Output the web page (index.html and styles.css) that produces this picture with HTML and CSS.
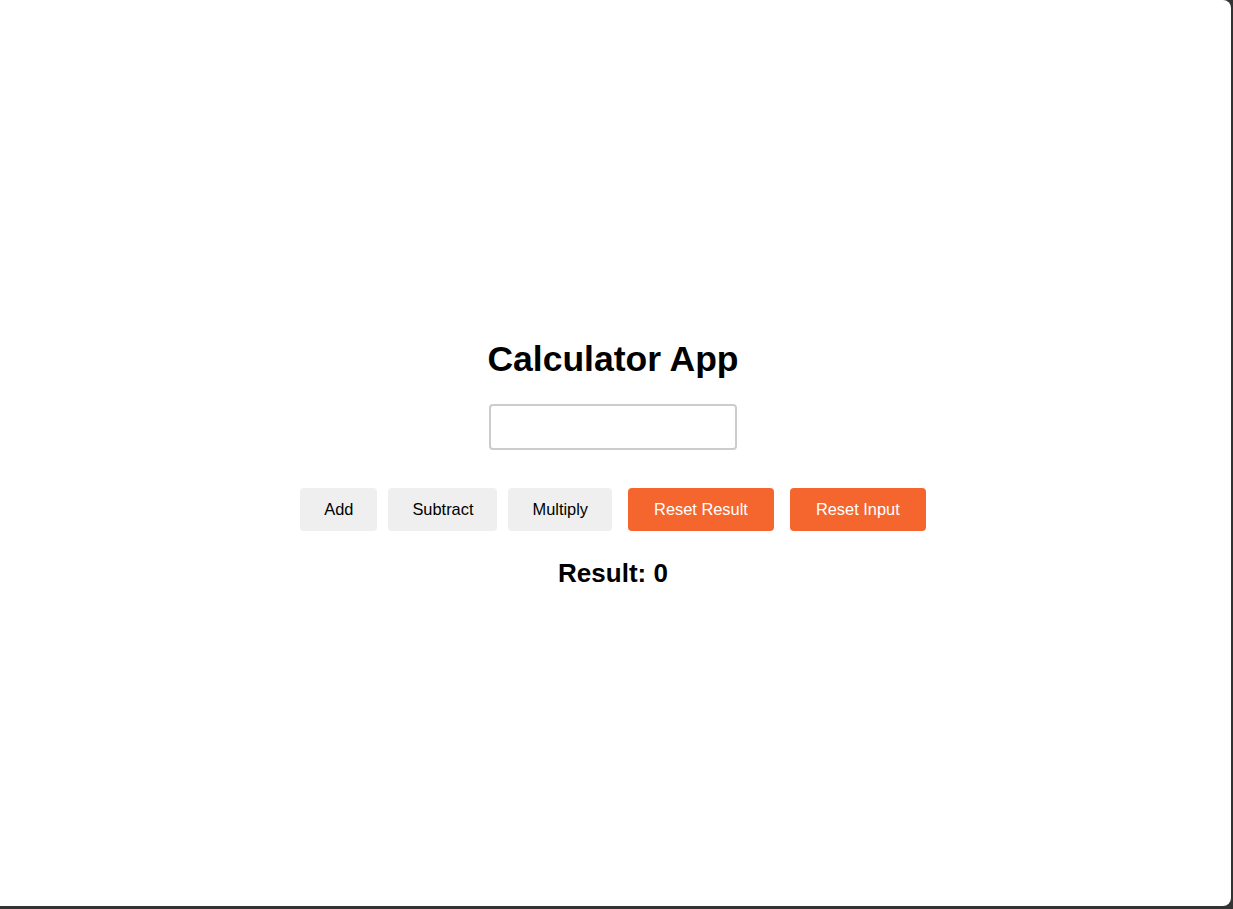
FILE: index.html
```html
<!DOCTYPE html>
<html lang="en">
<head>
<meta charset="utf-8">
<title>Calculator App</title>
<link rel="stylesheet" href="styles.css">
</head>
<body>
<div class="window">
  <main class="app">
    <h1 class="title">Calculator App</h1>
    <input class="field" type="text" aria-label="Number">
    <div class="actions">
      <div class="group">
        <button class="btn">Add</button>
        <button class="btn">Subtract</button>
        <button class="btn">Multiply</button>
      </div>
      <div class="group group-reset">
        <button class="btn btn-reset">Reset Result</button>
        <button class="btn btn-reset">Reset Input</button>
      </div>
    </div>
    <h2 class="result">Result: 0</h2>
  </main>
</div>
</body>
</html>
```

FILE: styles.css
```css
html, body {
  margin: 0;
  padding: 0;
  background: #333333;
}
body {
  font-family: "Liberation Sans", Arial, sans-serif;
  width: 1233px;
  height: 909px;
  overflow: hidden;
}
.window {
  width: 1231px;
  height: 906px;
  background: #ffffff;
  border-radius: 0 8px 8px 0;
  display: flex;
  align-items: center;
  justify-content: center;
}
.app {
  display: flex;
  flex-direction: column;
  align-items: center;
  margin-top: 22px;
  margin-right: 5px;
}
.title {
  font-size: 35.5px;
  font-weight: bold;
  margin: 0;
  line-height: 40px;
  color: #000;
}
.field {
  box-sizing: border-box;
  width: 248px;
  height: 46px;
  margin-top: 25px;
  border: 2px solid #cccccc;
  border-radius: 4px;
  font-size: 16px;
  padding: 0 10px;
  outline: none;
}
.actions {
  display: flex;
  gap: 16px;
  margin-top: 38px;
}
.group {
  display: flex;
  gap: 11px;
}
.group-reset {
  gap: 16px;
}
.btn {
  box-sizing: border-box;
  height: 43px;
  padding: 0 24px;
  border: none;
  border-radius: 4px;
  background: #efefef;
  color: #000;
  font-family: "Liberation Sans", Arial, sans-serif;
  font-size: 16.4px;
}
.btn-reset {
  background: #f4662d;
  color: #ffffff;
  padding: 0 26px;
}
.result {
  font-size: 26px;
  font-weight: bold;
  margin: 26px 0 0;
  line-height: 32px;
}
```
